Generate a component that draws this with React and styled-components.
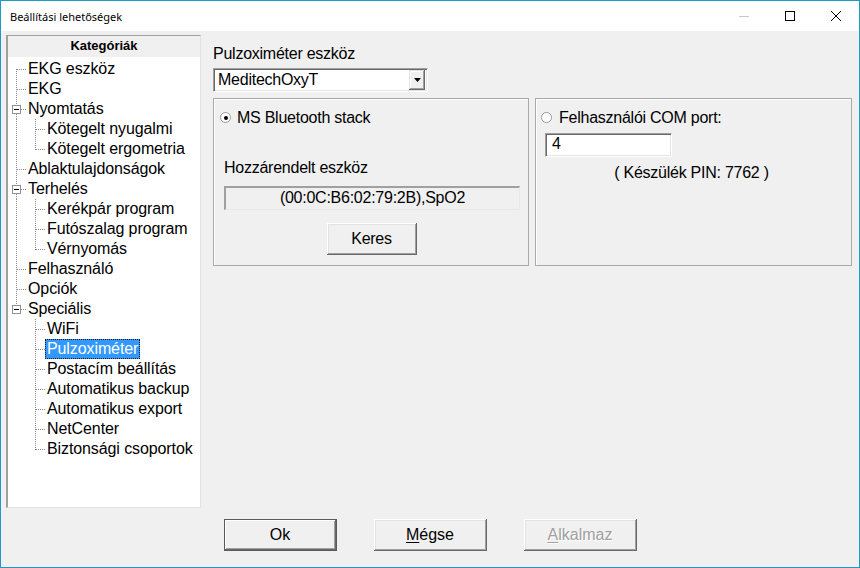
import React from 'react'
import styled, { createGlobalStyle } from 'styled-components'

const GlobalStyle = createGlobalStyle`
    html, body {
        margin: 0;
        padding: 0;
        background: #fff;
    }
    body {
        font-family: "Liberation Sans", Arial, sans-serif;
        font-size: 16px;
        color: #000;
    }
`

const LINE = '#8c8c8c'

const treeData = [
    { label: 'EKG eszköz', level: 0, first: true },
    { label: 'EKG', level: 0 },
    { label: 'Nyomtatás', level: 0, box: true },
    { label: 'Kötegelt nyugalmi', level: 1 },
    { label: 'Kötegelt ergometria', level: 1, lastChild: true },
    { label: 'Ablaktulajdonságok', level: 0 },
    { label: 'Terhelés', level: 0, box: true },
    { label: 'Kerékpár program', level: 1 },
    { label: 'Futószalag program', level: 1 },
    { label: 'Vérnyomás', level: 1, lastChild: true },
    { label: 'Felhasználó', level: 0 },
    { label: 'Opciók', level: 0 },
    { label: 'Speciális', level: 0, box: true, lastTop: true },
    { label: 'WiFi', level: 1, parentLast: true },
    { label: 'Pulzoximéter', level: 1, parentLast: true, selected: true },
    { label: 'Postacím beállítás', level: 1, parentLast: true },
    { label: 'Automatikus backup', level: 1, parentLast: true },
    { label: 'Automatikus export', level: 1, parentLast: true },
    { label: 'NetCenter', level: 1, parentLast: true },
    { label: 'Biztonsági csoportok', level: 1, parentLast: true, lastChild: true },
]

function Connector({ node }) {
    const { level, first, lastTop, box, lastChild, parentLast } = node
    const w = level === 0 ? 18 : 37
    const seg = (x1, y1, x2, y2, key) => (
        <line key={key} x1={x1} y1={y1} x2={x2} y2={y2} stroke={LINE} strokeDasharray="1 1" />
    )
    const lines = []
    if (level === 0) {
        if (box) {
            if (!first) lines.push(seg(8.5, 0, 8.5, 6, 'vt'))
            if (!lastTop) lines.push(seg(8.5, 15, 8.5, 20, 'vb'))
            lines.push(seg(13, 10.5, 18, 10.5, 'h'))
        } else {
            lines.push(seg(8.5, first ? 10 : 0, 8.5, lastTop ? 11 : 20, 'v'))
            lines.push(seg(9, 10.5, 18, 10.5, 'h'))
        }
    } else {
        if (!parentLast) lines.push(seg(8.5, 0, 8.5, 20, 'p'))
        lines.push(seg(27.5, 0, 27.5, lastChild ? 11 : 20, 'v'))
        lines.push(seg(28, 10.5, 37, 10.5, 'h'))
    }
    return (
        <svg width={w} height={20} style={{ flex: 'none', display: 'block' }}>
            {lines}
            {box && (
                <g>
                    <rect x={4.5} y={6.5} width={8} height={8} fill="#fff" stroke="#919191" />
                    <line x1={6} y1={10.5} x2={11} y2={10.5} stroke="#000" />
                </g>
            )}
        </svg>
    )
}

function TitleIcon({ kind }) {
    if (kind === 'min') {
        return (
            <svg width="10" height="10">
                <line x1="0" y1="5.5" x2="10" y2="5.5" stroke="#c6c6c6" />
            </svg>
        )
    }
    if (kind === 'max') {
        return (
            <svg width="10" height="10">
                <rect x="0.5" y="0.5" width="9" height="9" fill="none" stroke="#000" />
            </svg>
        )
    }
    return (
        <svg width="10" height="10">
            <path d="M0 0 L10 10 M10 0 L0 10" stroke="#000" strokeWidth="1" />
        </svg>
    )
}

function App() {
    return (
        <>
            <GlobalStyle />
            <Window>
                <TitleBar>
                    <Title>Beállítási lehetőségek</Title>
                    <Caption>
                        <CaptionButton><TitleIcon kind="min" /></CaptionButton>
                        <CaptionButton><TitleIcon kind="max" /></CaptionButton>
                        <CaptionButton><TitleIcon kind="close" /></CaptionButton>
                    </Caption>
                </TitleBar>

                <Body>
                    <Main>
                        <TreePanel>
                            <TreeHeader>Kategóriák</TreeHeader>
                            <TreeList>
                                {treeData.map(node => (
                                    <TreeRow key={node.label}>
                                        <Connector node={node} />
                                        <TreeLabel $selected={node.selected}>{node.label}</TreeLabel>
                                    </TreeRow>
                                ))}
                            </TreeList>
                        </TreePanel>

                        <Settings>
                            <FieldLabel>Pulzoximéter eszköz</FieldLabel>
                            <Combo>
                                <ComboValue>MeditechOxyT</ComboValue>
                                <ComboArrow>
                                    <svg width="7" height="4">
                                        <path d="M0 0 H7 L3.5 4 Z" fill="#000" />
                                    </svg>
                                </ComboArrow>
                            </Combo>

                            <Groups>
                                <GroupBox>
                                    <RadioRow $gap={6}>
                                        <Radio $checked />
                                        <span>MS Bluetooth stack</span>
                                    </RadioRow>
                                    <SubLabel>Hozzárendelt eszköz</SubLabel>
                                    <ReadOnlyField>(00:0C:B6:02:79:2B),SpO2</ReadOnlyField>
                                    <ButtonRow>
                                        <Button $w={90}>Keres</Button>
                                    </ButtonRow>
                                </GroupBox>

                                <GroupBox $right>
                                    <RadioRow $gap={7}>
                                        <Radio />
                                        <span>Felhasználói COM port:</span>
                                    </RadioRow>
                                    <TextInput>4</TextInput>
                                    <PinText>( Készülék PIN: 7762 )</PinText>
                                </GroupBox>
                            </Groups>
                        </Settings>
                    </Main>

                    <Footer>
                        <Button $w={113} $default>Ok</Button>
                        <Button $w={113}><u>M</u>égse</Button>
                        <Button $w={113} $disabled><u>A</u>lkalmaz</Button>
                    </Footer>
                </Body>
            </Window>
        </>
    )
}

const Window = styled.div`
    width: 860px;
    height: 568px;
    box-sizing: border-box;
    border: 1px solid #1e9ac8;
    display: flex;
    flex-direction: column;
    background: #fff;
    overflow: hidden;
`

const TitleBar = styled.div`
    height: 30px;
    flex: none;
    display: flex;
    align-items: center;
    background: #fff;
`

const Title = styled.div`
    flex: 1;
    padding-left: 9px;
    font-family: "Noto Sans", "Liberation Sans", sans-serif;
    font-size: 11px;
    color: #000;
`

const Caption = styled.div`
    display: flex;
    align-self: flex-start;
`

const CaptionButton = styled.div`
    width: 46px;
    height: 29px;
    display: flex;
    align-items: center;
    justify-content: center;
`

const Body = styled.div`
    flex: 1;
    background: #f0f0f0;
    padding: 4px 6px 0 5px;
    display: flex;
    flex-direction: column;
`

const Main = styled.div`
    height: 473px;
    display: flex;
    gap: 12px;
`

const TreePanel = styled.div`
    width: 195px;
    box-sizing: border-box;
    background: #fff;
    border-style: solid;
    border-width: 1px 1px 1px 2px;
    border-color: #a0a0a0 #e3e3e3 #e3e3e3 #a0a0a0;
    display: flex;
    flex-direction: column;
`

const TreeHeader = styled.div`
    height: 21px;
    flex: none;
    background: #f0f0f0;
    font-size: 13px;
    font-weight: bold;
    text-align: center;
    line-height: 19px;
`

const TreeList = styled.div`
    padding-top: 2px;
    display: flex;
    flex-direction: column;
`

const TreeRow = styled.div`
    height: 20px;
    display: flex;
    align-items: center;
`

const TreeLabel = styled.span`
    height: 20px;
    box-sizing: border-box;
    line-height: 18px;
    padding: 0 1px;
    white-space: nowrap;
    letter-spacing: -0.1px;
    border: 1px ${p => (p.$selected ? 'dotted #1a1a1a' : 'solid transparent')};
    background: ${p => (p.$selected ? '#3399ff' : 'transparent')};
    color: ${p => (p.$selected ? '#fff' : '#000')};
`

const Settings = styled.div`
    flex: 1;
    display: flex;
    flex-direction: column;
    padding-top: 9px;
    letter-spacing: -0.25px;
`

const FieldLabel = styled.div`
    line-height: 19px;
    margin-bottom: 5px;
`

const Sunken = styled.div`
    box-sizing: border-box;
    border-style: solid;
    border-width: 1px;
    border-color: #a0a0a0 #fff #fff #a0a0a0;
    box-shadow: inset 1px 1px #696969, inset -1px -1px #e3e3e3;
`

const Combo = styled(Sunken)`
    width: 215px;
    height: 24px;
    background: #fff;
    display: flex;
    align-items: center;
    padding: 2px;
`

const ComboValue = styled.div`
    flex: 1;
    padding-left: 2px;
    line-height: 20px;
`

const ComboArrow = styled.div`
    width: 16px;
    height: 20px;
    box-sizing: border-box;
    background: #f0f0f0;
    display: flex;
    align-items: center;
    justify-content: center;
    box-shadow: inset -1px -1px #696969, inset 1px 1px #e3e3e3, inset -2px -2px #a0a0a0, inset 2px 2px #fff;
`

const Groups = styled.div`
    margin-top: 6px;
    display: flex;
    gap: 6px;
`

const GroupBox = styled.div`
    width: ${p => (p.$right ? '317px' : '316px')};
    height: 168px;
    box-sizing: border-box;
    border: 1px solid #a9a9a9;
    box-shadow: inset 1px 1px #fff;
    display: flex;
    flex-direction: column;
    padding: 9px 9px 0 ${p => (p.$right ? '9px' : '10px')};
`

const RadioRow = styled.div`
    display: flex;
    align-items: center;
    gap: ${p => p.$gap}px;
    line-height: 19px;
    margin-left: -4px;
`

const Radio = styled.span`
    width: 11px;
    height: 11px;
    flex: none;
    box-sizing: border-box;
    border-radius: 50%;
    border: 1px solid #9a9a9a;
    background: #fff;
    display: inline-flex;
    align-items: center;
    justify-content: center;
    &::after {
        content: '';
        width: 4px;
        height: 4px;
        border-radius: 50%;
        background: ${p => (p.$checked ? '#000' : 'transparent')};
    }
`

const SubLabel = styled.div`
    margin-top: 31px;
    line-height: 19px;
`

const ReadOnlyField = styled(Sunken)`
    margin-top: 9px;
    width: 296px;
    height: 24px;
    background: #f0f0f0;
    box-shadow: none;
    border-color: #a0a0a0 #e8e8e8 #e8e8e8 #a0a0a0;
    border-width: 2px 1px 1px 2px;
    text-align: center;
    line-height: 20px;
`

const ButtonRow = styled.div`
    margin-top: 13px;
    display: flex;
    justify-content: center;
`

const Button = styled.div`
    width: ${p => p.$w}px;
    height: 32px;
    box-sizing: border-box;
    background: #f0f0f0;
    display: flex;
    align-items: center;
    justify-content: center;
    color: ${p => (p.$disabled ? '#a0a0a0' : '#000')};
    text-shadow: ${p => (p.$disabled ? '1px 1px #fff' : 'none')};
    box-shadow: ${p =>
        p.$default
            ? 'inset 0 0 0 1px #5a5a5a, inset -2px -2px #696969, inset 2px 2px #fff, inset -3px -3px #a0a0a0'
            : 'inset -1px -1px #696969, inset 1px 1px #fff, inset -2px -2px #a0a0a0, inset 2px 2px #e3e3e3'};
    u {
        text-decoration: underline;
        text-underline-offset: 2px;
    }
`

const TextInput = styled(Sunken)`
    margin-top: 6px;
    width: 127px;
    height: 24px;
    background: #fff;
    padding-left: 6px;
    line-height: 20px;
`

const PinText = styled.div`
    margin-top: 6px;
    line-height: 19px;
    text-align: center;
    margin-left: -4px;
`

const Footer = styled.div`
    margin-top: 11px;
    display: flex;
    justify-content: center;
    gap: 37px;
    padding-left: 1px;
`

export default App
